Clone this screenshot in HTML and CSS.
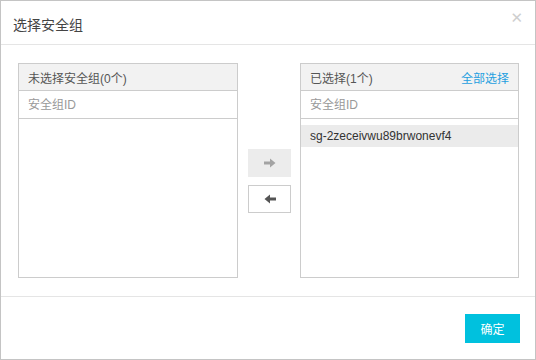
FILE: index.html
```
<!DOCTYPE html>
<html>
<head>
    <title>选择安全组</title>
    <link rel="stylesheet" href="styles.css">
</head>
<body>
    <div class="dialog">
        <div class="dialog-header">
            <span class="dialog-title">选择安全组</span>
            <span class="close">&#x2715;</span>
        </div>

        <div class="dialog-body">
            <div class="panel">
                <div class="panel-head">
                    <span>未选择安全组(0个)</span>
                </div>
                <div class="panel-search">
                    <input type="text" placeholder="安全组ID">
                </div>
                <div class="panel-list"></div>
            </div>

            <div class="move-btns">
                <button class="move disabled">
                    <svg width="12" height="10" viewBox="0 0 12 10"><path d="M0 3.5h6V0.5L11.5 5 6 9.5V6.5H0z" fill="#a3a3a3"/></svg>
                </button>
                <button class="move">
                    <svg width="12" height="10" viewBox="0 0 12 10"><path d="M12 3.5H6V0.5L0.5 5 6 9.5V6.5H12z" fill="#555"/></svg>
                </button>
            </div>

            <div class="panel right">
                <div class="panel-head">
                    <span>已选择(1个)</span>
                    <a class="select-all" href="#">全部选择</a>
                </div>
                <div class="panel-search">
                    <input type="text" placeholder="安全组ID">
                </div>
                <div class="panel-list">
                    <div class="item">sg-2zeceivwu89brwonevf4</div>
                </div>
            </div>
        </div>

        <div class="dialog-footer">
            <button class="ok">确定</button>
        </div>
    </div>
</body>
</html>
```

FILE: styles.css
```
body {
    margin: 0;
    font-family: "Liberation Sans", Arial, "Noto Sans CJK SC", sans-serif;
    font-size: 12px;
    color: #333;
}
.dialog {
    width: 536px;
    height: 360px;
    box-sizing: border-box;
    border: 1px solid #c4c4c4;
    background: #fff;
    display: flex;
    flex-direction: column;
}
.dialog-header {
    height: 43px;
    border-bottom: 1px solid #e5e5e5;
    display: flex;
    align-items: center;
    justify-content: space-between;
    padding: 0 12px 0 12px;
}
.dialog-title {
    font-size: 14px;
    color: #444;
    margin-top: 2px;
}
.close {
    color: #cfcfcf;
    font-size: 15px;
    margin-top: -9px;
    font-family: "DejaVu Sans", sans-serif;
}
.dialog-body {
    height: 252px;
    box-sizing: border-box;
    padding: 18px 16px 0 17px;
    border-bottom: 1px solid #e5e5e5;
    display: flex;
    justify-content: space-between;
}
.panel {
    width: 220px;
    height: 215px;
    box-sizing: border-box;
    border: 1px solid #ccc;
    display: flex;
    flex-direction: column;
}
.panel.right { width: 219px; }
.panel-head {
    height: 26px;
    background: #f2f2f2;
    border-bottom: 1px solid #ccc;
    display: flex;
    align-items: center;
    justify-content: space-between;
    padding: 0 9px;
    color: #555;
}
.select-all {
    color: #1e9fe0;
    text-decoration: none;
}
.panel-search {
    height: 27px;
    border-bottom: 1px solid #ccc;
    display: flex;
    align-items: center;
}
.panel-search input {
    border: none;
    outline: none;
    width: 100%;
    padding: 0 9px;
    font-family: inherit;
    font-size: 12px;
    background: transparent;
}
.panel-search input::placeholder { color: #999; }
.panel-list {
    flex: 1;
    padding-top: 6px;
}
.item {
    height: 22px;
    line-height: 22px;
    background: #ebebeb;
    padding: 0 9px;
    color: #333;
}
.move-btns {
    display: flex;
    flex-direction: column;
    gap: 8px;
    padding-top: 86px;
    margin-left: 1px;
}
.move {
    width: 43px;
    height: 28px;
    border: 1px solid #ccc;
    background: #fff;
    display: flex;
    align-items: center;
    justify-content: center;
    padding: 0;
}
.move.disabled {
    background: #ececec;
    border-color: #ececec;
}
.dialog-footer {
    flex: 1;
    display: flex;
    justify-content: flex-end;
    padding: 17px 15px 0 0;
}
.ok {
    width: 55px;
    height: 29px;
    border: none;
    background: #00c1de;
    color: #fff;
    font-family: inherit;
    font-size: 12px;
    padding: 0;
}
```
